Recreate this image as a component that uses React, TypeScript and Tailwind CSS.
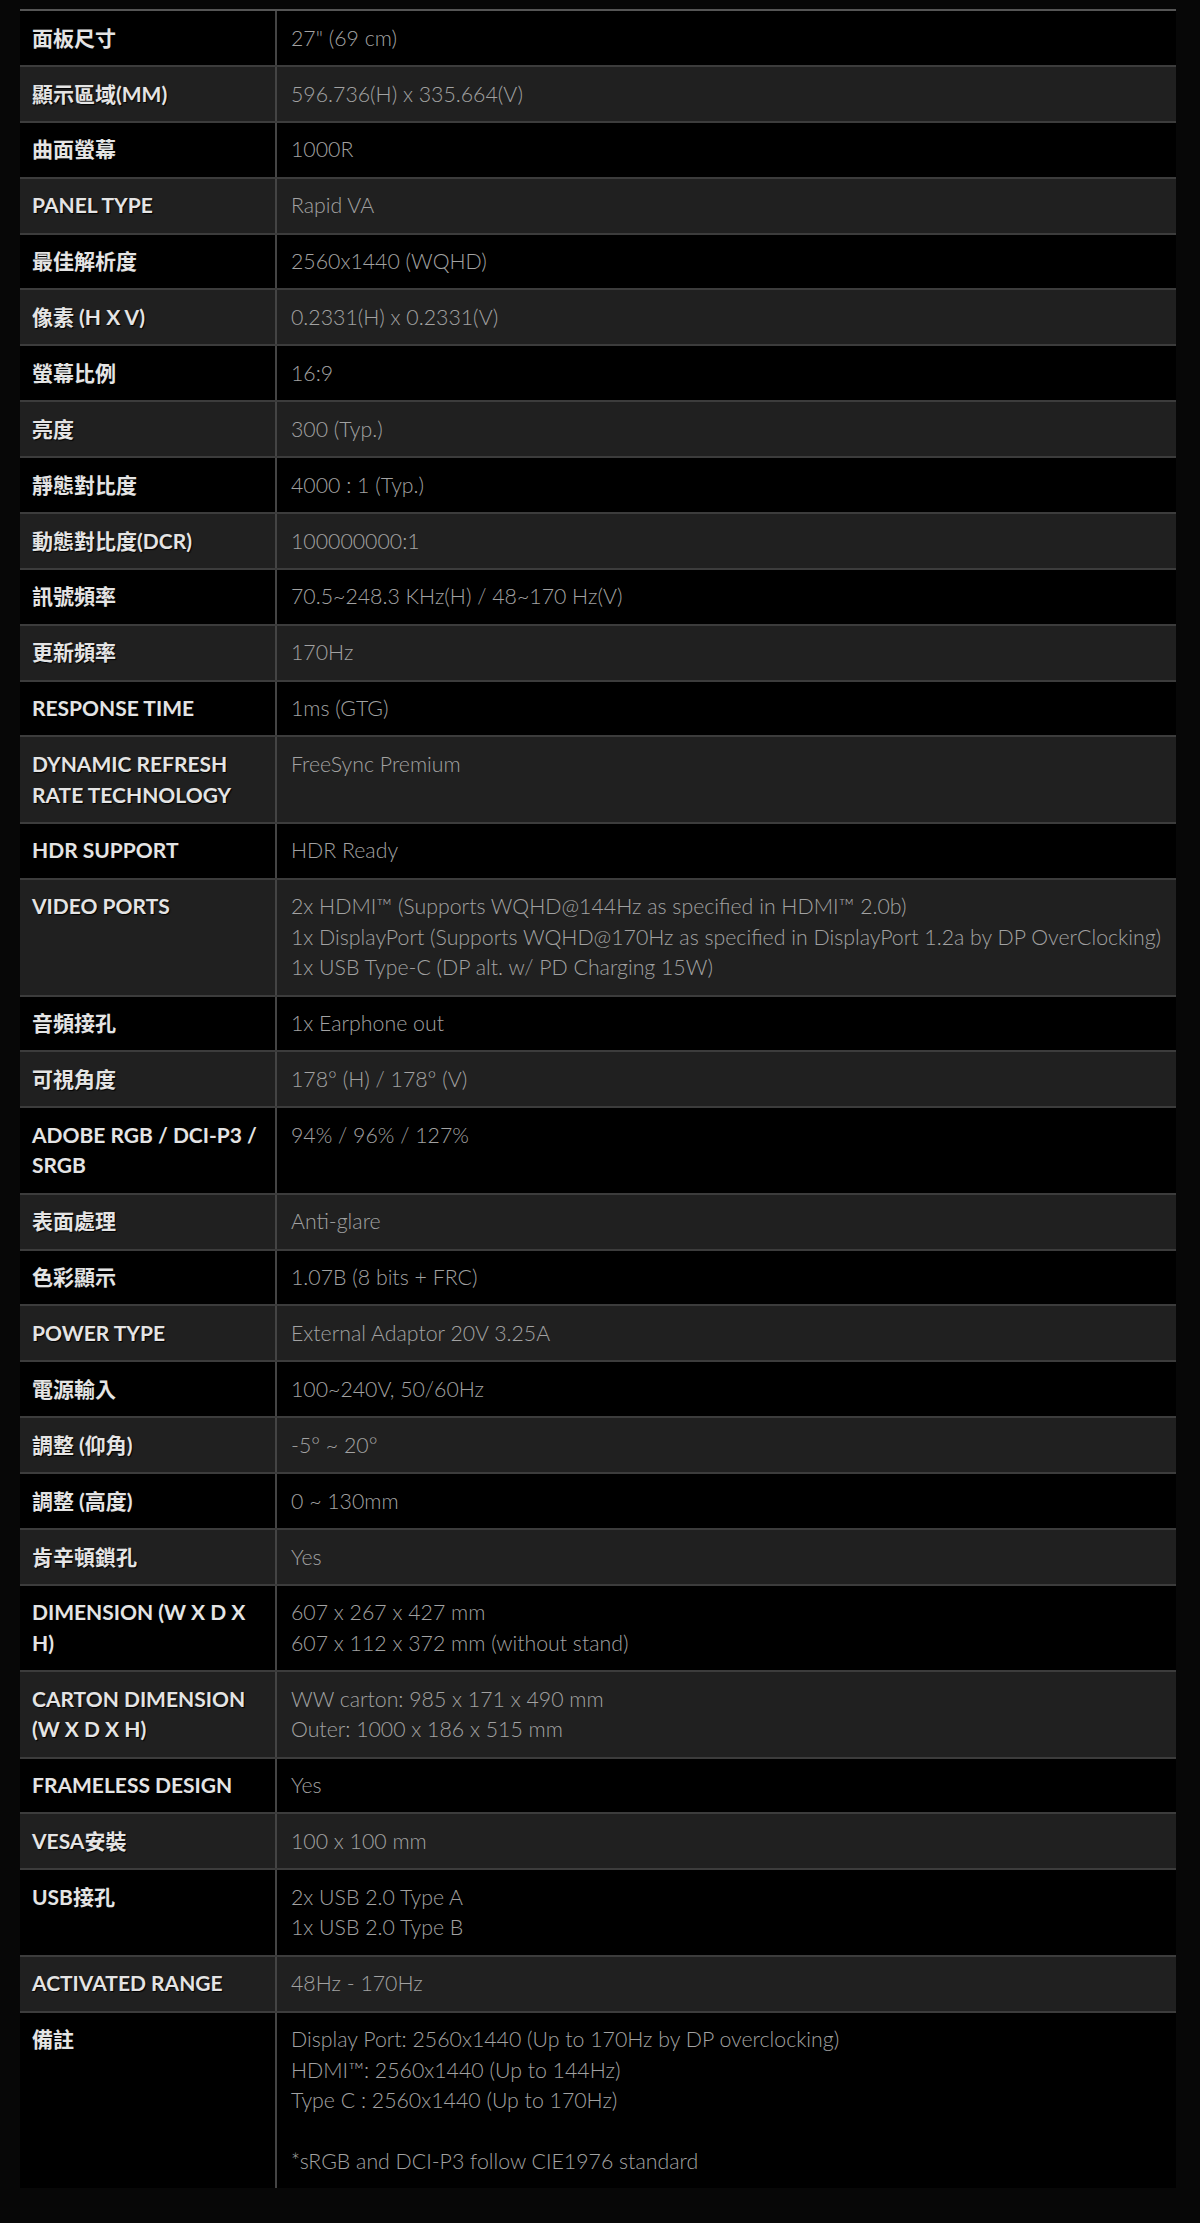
import React from "react";

type Spec = { label: string; value: string[] };

const specs: Spec[] = [
  { label: "面板尺寸", value: ['27" (69 cm)'] },
  { label: "顯示區域(MM)", value: ["596.736(H) x 335.664(V)"] },
  { label: "曲面螢幕", value: ["1000R"] },
  { label: "PANEL TYPE", value: ["Rapid VA"] },
  { label: "最佳解析度", value: ["2560x1440 (WQHD)"] },
  { label: "像素 (H X V)", value: ["0.2331(H) x 0.2331(V)"] },
  { label: "螢幕比例", value: ["16:9"] },
  { label: "亮度", value: ["300 (Typ.)"] },
  { label: "靜態對比度", value: ["4000 : 1 (Typ.)"] },
  { label: "動態對比度(DCR)", value: ["100000000:1"] },
  { label: "訊號頻率", value: ["70.5~248.3 KHz(H) / 48~170 Hz(V)"] },
  { label: "更新頻率", value: ["170Hz"] },
  { label: "RESPONSE TIME", value: ["1ms (GTG)"] },
  { label: "DYNAMIC REFRESH RATE TECHNOLOGY", value: ["FreeSync Premium"] },
  { label: "HDR SUPPORT", value: ["HDR Ready"] },
  {
    label: "VIDEO PORTS",
    value: [
      "2x HDMI™ (Supports WQHD@144Hz as specified in HDMI™ 2.0b)",
      "1x DisplayPort (Supports WQHD@170Hz as specified in DisplayPort 1.2a by DP OverClocking)",
      "1x USB Type-C (DP alt. w/ PD Charging 15W)",
    ],
  },
  { label: "音頻接孔", value: ["1x Earphone out"] },
  { label: "可視角度", value: ["178° (H) / 178° (V)"] },
  { label: "ADOBE RGB / DCI-P3 / SRGB", value: ["94% / 96% / 127%"] },
  { label: "表面處理", value: ["Anti-glare"] },
  { label: "色彩顯示", value: ["1.07B (8 bits + FRC)"] },
  { label: "POWER TYPE", value: ["External Adaptor 20V 3.25A"] },
  { label: "電源輸入", value: ["100~240V, 50/60Hz"] },
  { label: "調整 (仰角)", value: ["-5° ~ 20°"] },
  { label: "調整 (高度)", value: ["0 ~ 130mm"] },
  { label: "肯辛頓鎖孔", value: ["Yes"] },
  {
    label: "DIMENSION (W X D X H)",
    value: ["607 x 267 x 427 mm", "607 x 112 x 372 mm (without stand)"],
  },
  {
    label: "CARTON DIMENSION (W X D X H)",
    value: ["WW carton: 985 x 171 x 490 mm", "Outer: 1000 x 186 x 515 mm"],
  },
  { label: "FRAMELESS DESIGN", value: ["Yes"] },
  { label: "VESA安裝", value: ["100 x 100 mm"] },
  { label: "USB接孔", value: ["2x USB 2.0 Type A", "1x USB 2.0 Type B"] },
  { label: "ACTIVATED RANGE", value: ["48Hz - 170Hz"] },
  {
    label: "備註",
    value: [
      "Display Port: 2560x1440 (Up to 170Hz by DP overclocking)",
      "HDMI™: 2560x1440 (Up to 144Hz)",
      "Type C : 2560x1440 (Up to 170Hz)",
      "",
      "*sRGB and DCI-P3 follow CIE1976 standard",
    ],
  },
];

export default function App() {
  return (
    <div
      className="min-h-[2223px] w-[1200px] bg-[#070707] pt-[9px] pb-[32px] pl-[20px] pr-[24px]"
      style={{ fontFamily: '"Lato", "Noto Sans CJK TC", sans-serif' }}
    >
      <div className="border-t-2 border-[#555555]">
        {specs.map((row, i) => (
          <div
            key={row.label}
            className={`flex ${i > 0 ? "border-t-2 border-[#3c3c3c]" : ""} ${
              i % 2 === 1 ? "bg-[#202020]" : "bg-black"
            }`}
          >
            <div className="w-[257px] shrink-0 border-r-2 border-[#444444] py-[11.7px] pl-[12px] pr-[18px] text-[21px] font-bold leading-[30.5px] text-[#e4e4e4] [text-shadow:1px_1px_1px_#000]">
              {row.label}
            </div>
            <div className="flex-1 py-[11.7px] pl-[14px] pr-[4px] text-[21.3px] font-light leading-[30.5px] text-[#a2a2a2]">
              {row.value.map((line, j) => (
                <div key={j} className="whitespace-nowrap">
                  {line === "" ? "\u00a0" : line}
                </div>
              ))}
            </div>
          </div>
        ))}
      </div>
    </div>
  );
}
